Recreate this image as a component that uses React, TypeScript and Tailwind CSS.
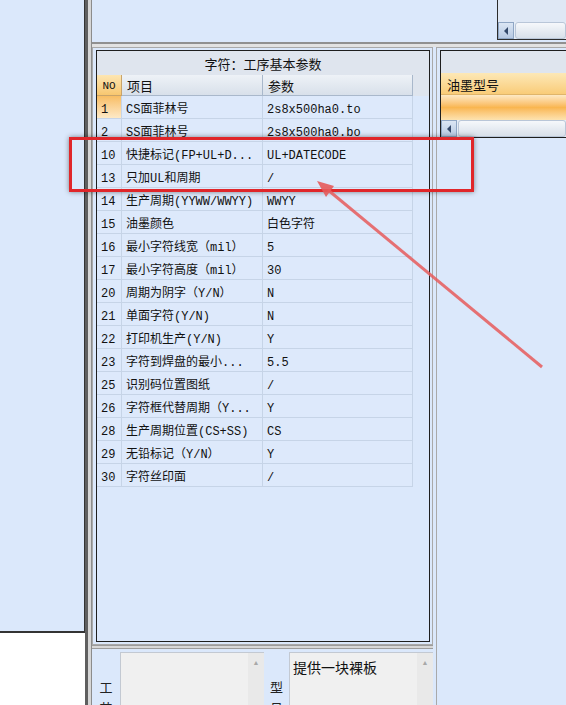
const rows: [string, string, string][] = [
  ['1', 'CS面菲林号', '2s8x500ha0.to'],
  ['2', 'SS面菲林号', '2s8x500ha0.bo'],
  ['10', '快捷标记(FP+UL+D...', 'UL+DATECODE'],
  ['13', '只加UL和周期', '/'],
  ['14', '生产周期(YYWW/WWYY)', 'WWYY'],
  ['15', '油墨颜色', '白色字符'],
  ['16', '最小字符线宽（mil）', '5'],
  ['17', '最小字符高度（mil）', '30'],
  ['20', '周期为阴字（Y/N）', 'N'],
  ['21', '单面字符(Y/N)', 'N'],
  ['22', '打印机生产(Y/N)', 'Y'],
  ['23', '字符到焊盘的最小...', '5.5'],
  ['25', '识别码位置图纸', '/'],
  ['26', '字符框代替周期（Y...', 'Y'],
  ['28', '生产周期位置(CS+SS)', 'CS'],
  ['29', '无铅标记（Y/N）', 'Y'],
  ['30', '字符丝印面', '/'],
];

function HScroll() {
  return (
    <div className="flex h-full w-full bg-[#e6edf6]">
      <div className="flex w-[16px] items-center justify-center border border-[#8fa6c4] bg-gradient-to-b from-[#dbe6f4] to-[#b7c9e2]">
        <div className="h-0 w-0 border-y-[4px] border-r-[4px] border-y-transparent border-r-[#34496a]" />
      </div>
      <div className="ml-[1px] flex-1 rounded-[3px] border border-[#b9c6d8] bg-gradient-to-b from-[#f6f8fb] to-[#d8e0ea]" />
    </div>
  );
}

function TextBox({ text }: { text?: string }) {
  return (
    <div className="flex h-[60px] flex-1 shrink-0 border-l border-t border-[#c3c9d2] bg-[#f0f0f0]">
      <div className="flex-1 px-[3px] pt-[7px] font-['Noto_Sans_CJK_SC',sans-serif] text-[14px] leading-none text-[#111]">
        {text}
      </div>
      <div className="flex w-[16px] justify-center bg-[#e9e9e9] pt-[6px] text-[7px] leading-none text-[#a8a8a8]">
        ▲
      </div>
    </div>
  );
}

function VLabel({ chars }: { chars: string }) {
  return (
    <div className="flex flex-col items-center pt-[24px] font-['Noto_Sans_CJK_SC',sans-serif] text-[13px] leading-[21px] text-[#222]">
      {chars.split('').map((c, i) => (
        <span key={i}>{c}</span>
      ))}
    </div>
  );
}

export default function App() {
  const cell = "pt-[5px] font-['Liberation_Mono','Noto_Sans_CJK_SC',monospace] text-[12px] leading-none text-[#111]";
  return (
    <div className="relative flex h-[705px] w-[566px] overflow-hidden bg-[#dbe8fb]">
      {/* left pane */}
      <div className="flex w-[85px] shrink-0 flex-col bg-white">
        <div className="h-[633px] shrink-0 border-b-2 border-r border-[#333] bg-[#dbe8fb]" />
      </div>
      <div className="w-[7px] shrink-0 border-l-[3px] border-r border-l-[#5f5f5f] border-r-[#8c8c8c] bg-[#d6d6d6]" />

      {/* center pane */}
      <div className="flex w-[341px] shrink-0 flex-col">
        <div className="h-[42px] shrink-0" />
        <div className="h-[5px] shrink-0 border-t-2 border-[#909090] bg-[#e2e2e2]" />
        <div className="flex h-[598px] shrink-0 flex-col border border-[#a9a9a9] pb-[2px] pl-[3px] pr-[2px] pt-[2px]">
          <div className="flex flex-1 flex-col border border-[#1e1e1e] bg-[#dbe8fb]">
            <div className="flex h-[24px] shrink-0 items-center justify-center bg-[#dfe5ee] font-['Noto_Sans_CJK_SC',sans-serif] text-[13px] leading-none text-[#111]">
              字符：工序基本参数
            </div>
            <div className="flex h-[21px] shrink-0 bg-[#dfe5ee] font-['Noto_Sans_CJK_SC',sans-serif] text-[13px] leading-none text-[#111]">
              <div className="flex w-[25px] items-center justify-center border-b border-r border-[#c9a46a] bg-gradient-to-b from-[#fde6b2] to-[#f8c76f] pt-[2px] font-['Liberation_Mono',monospace] text-[11px]">
                NO
              </div>
              <div className="flex w-[141px] items-center border-b border-r border-[#a9b8cb] bg-gradient-to-b from-[#eef2f7] to-[#d8e0ea] pl-[5px]">
                项目
              </div>
              <div className="flex w-[150px] items-center border-b border-r border-[#a9b8cb] bg-gradient-to-b from-[#eef2f7] to-[#d8e0ea] pl-[5px]">
                参数
              </div>
            </div>
            {rows.map(([no, item, val], i) => (
              <div key={no} className="flex h-[23px] shrink-0">
                <div
                  className={`flex w-[25px] items-center border-b border-r border-[#c6d4e7] pl-[4px] ${cell} ${
                    i === 0 ? 'bg-gradient-to-b from-[#f8bd62] to-[#fde9c6]' : 'bg-[#dde9fb]'
                  }`}
                >
                  {no}
                </div>
                <div className={`flex w-[141px] items-center border-b border-r border-[#c6d4e7] bg-[#dde9fb] pl-[4px] ${cell}`}>
                  {item}
                </div>
                <div className={`flex w-[150px] items-center border-b border-r border-[#c6d4e7] bg-[#dde9fb] pl-[4px] ${cell}`}>
                  {val}
                </div>
              </div>
            ))}
          </div>
        </div>
        <div className="h-[4px] shrink-0 border-b border-t border-[#9c9c9c] bg-[#d8d8d8]" />
        <div className="flex min-h-0 flex-1 overflow-hidden pt-[3px]">
          <div className="w-[28px] shrink-0">
            <VLabel chars="工艺" />
          </div>
          <TextBox />
          <div className="w-[25px] shrink-0">
            <VLabel chars="型号" />
          </div>
          <TextBox text="提供一块裸板" />
        </div>
      </div>

      {/* right pane */}
      <div className="flex flex-1 flex-col">
        <div className="flex h-[42px] shrink-0">
          <div className="w-[64px]" />
          <div className="flex h-[40px] flex-1 flex-col border-b border-l border-[#2c2c2c] bg-[#dfe8f5]">
            <div className="flex-1" />
            <div className="h-[17px]">
              <HScroll />
            </div>
          </div>
        </div>
        <div className="h-[5px] shrink-0 border-t-2 border-[#909090] bg-[#e2e2e2]" />
        <div className="ml-[3px] flex flex-1 flex-col border-l border-t border-[#a9a9a9] pl-[3px] pt-[2px]">
          <div className="flex h-[88px] shrink-0 flex-col border-b border-l border-t border-[#1e1e1e]">
            <div className="h-[22px] bg-[#dfe5ee]" />
            <div className="flex h-[22px] items-center border-b border-[#e0b56a] bg-gradient-to-b from-[#fde8b6] to-[#f9cc78] pl-[6px] pt-[2px] font-['Noto_Sans_CJK_SC',sans-serif] text-[13px] leading-none text-[#111]">
              油墨型号
            </div>
            <div className="h-[25px] bg-gradient-to-b from-[#fde9c4] via-[#f9b650] to-[#fde3b0]" />
            <div className="h-[17px]">
              <HScroll />
            </div>
          </div>
        </div>
      </div>

      {/* annotation overlay */}
      <div className="absolute left-[69px] top-[137px] h-[55px] w-[405px] border-[3px] border-[#e0262a] shadow-[0_0_5px_rgba(0,0,0,0.45)]" />
      <svg className="pointer-events-none absolute left-0 top-0" width="566" height="705">
        <line x1="542" y1="367" x2="328" y2="190" stroke="#e65a5a" strokeOpacity="0.85" strokeWidth="3" />
        <polygon points="317,181 334,186 326,197" fill="#e65a5a" fillOpacity="0.9" />
      </svg>
    </div>
  );
}
